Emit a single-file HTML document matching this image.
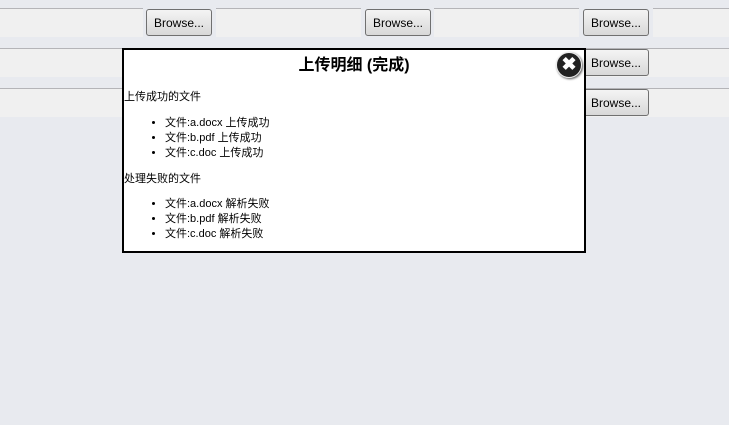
<!DOCTYPE html>
<html><head><meta charset="utf-8"><style>
body{margin:0;width:729px;height:425px;background:#e8eaef;position:relative;overflow:hidden;font-family:"Liberation Sans","Noto Sans CJK SC",sans-serif}
.p{position:absolute;background:#f0f0f0;border-top:1px solid #b4b4b8;height:28px}
.b{position:absolute;width:64px;height:25px;border:1px solid #707070;border-radius:3px;background:linear-gradient(#f4f4f4,#e6e6e6 50%,#d8d8d8);font-size:12px;line-height:26px;text-align:center;color:#000}
.m{position:absolute;left:122px;top:48px;width:460px;height:201px;background:#fff;border:2px solid #000}
.t{position:absolute;left:0;right:0;top:1px;text-align:center;font-weight:bold;font-size:16px}
.c{position:absolute;left:432px;top:2px;width:24px;height:24px;border-radius:50%;background:#222;border:1px solid #eee;box-shadow:1px 1px 2px #555;color:#fff;font-weight:bold;font-size:18px;line-height:23px;text-align:center}
.s{position:absolute;left:0;font-size:11px;line-height:15px}
ul{position:absolute;left:0;margin:0;padding-left:41px;font-size:11px;line-height:15px}
</style></head><body>
<div class="p" style="left:0;top:8px;width:143px"></div>
<div class="p" style="left:216px;top:8px;width:145px"></div>
<div class="p" style="left:434px;top:8px;width:145px"></div>
<div class="p" style="left:653px;top:8px;width:76px"></div>
<div class="p" style="left:0;top:48px;width:729px"></div>
<div class="p" style="left:0;top:88px;width:729px"></div>
<div class="b" style="left:146px;top:9px">Browse...</div>
<div class="b" style="left:365px;top:9px">Browse...</div>
<div class="b" style="left:583px;top:9px">Browse...</div>
<div class="b" style="left:583px;top:49px">Browse...</div>
<div class="b" style="left:583px;top:89px">Browse...</div>
<div class="m">
<div class="t">上传明细 (完成)</div>
<div class="c">✖</div>
<div class="s" style="top:40px">上传成功的文件</div>
<ul style="top:66px"><li>文件:a.docx 上传成功</li><li>文件:b.pdf 上传成功</li><li>文件:c.doc 上传成功</li></ul>
<div class="s" style="top:122px">处理失败的文件</div>
<ul style="top:147px"><li>文件:a.docx 解析失败</li><li>文件:b.pdf 解析失败</li><li>文件:c.doc 解析失败</li></ul>
</div>
</body></html>
